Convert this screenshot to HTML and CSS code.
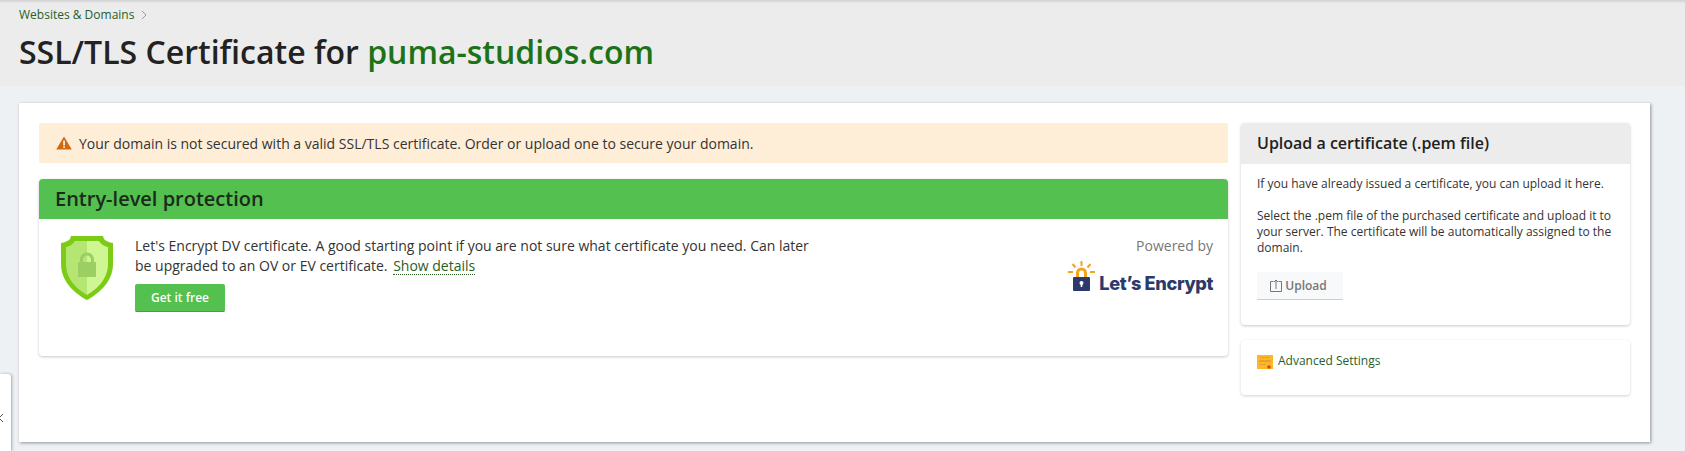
FILE: index.html
```html
<!DOCTYPE html>
<html lang="en">
<head>
<meta charset="utf-8">
<title>SSL/TLS Certificate</title>
<link rel="stylesheet" href="styles.css">
</head>
<body>
<header class="page-head">
  <nav class="crumbs"><a class="crumb-link">Websites &amp; Domains</a>
    <svg class="crumb-chevron" width="6" height="10" viewBox="0 0 6 10"><path d="M1 1l4 4-4 4" fill="none" stroke="#9a9a9a" stroke-width="1"/></svg>
  </nav>
  <h1 class="title">SSL/TLS Certificate for <span class="title-domain">puma-studios.com</span></h1>
</header>
<main class="sheet">
  <div class="left-col">
    <div class="alert">
      <svg class="alert-icon" width="16" height="14" viewBox="0 0 15 14" preserveAspectRatio="none"><path d="M7.5 0.5L14.8 13.5H0.2Z" fill="#cf6a12"/><rect x="6.8" y="4.6" width="1.5" height="4.8" fill="#fff"/><rect x="6.8" y="10.3" width="1.5" height="1.6" fill="#fff"/></svg>
      <span>Your domain is not secured with a valid SSL/TLS certificate. Order or upload one to secure your domain.</span>
    </div>
    <section class="offer">
      <h2 class="offer-head">Entry-level protection</h2>
      <div class="offer-body">
        <svg class="shield" width="52" height="64" viewBox="0 0 52 64">
          <path d="M10 0H42L43 3Q46 6 52 7V28C52 45 39 57 26 64C13 57 0 45 0 28V7Q6 6 9 3Z" fill="#7ccb14"/>
          <path d="M26 5V59C16 53 5 43 5 28V11Q11 10 14 5Z" fill="#b5e673"/>
          <path d="M26 5V59C36 53 47 43 47 28V11Q41 10 38 5Z" fill="#cff693"/>
          <path d="M19 27V24C19 14 33 14 33 24V27H30V24C30 18 22 18 22 24V27Z" fill="#9ccf63"/>
          <rect x="17" y="26" width="18" height="15" fill="#9ccf63"/>
        </svg>
        <div class="offer-text">
          <p class="offer-desc">Let's Encrypt DV certificate. A good starting point if you are not sure what certificate you need. Can later be upgraded to an OV or EV certificate. <a class="details-link">Show details</a></p>
          <button class="btn-free" type="button">Get it free</button>
        </div>
        <div class="vendor">
          <div class="powered">Powered by</div>
          <div class="le-logo">
            <svg class="le-mark" width="27" height="33" viewBox="0 0 27 33">
              <path d="M8 17V12a5.500 5.500 0 0 1 11 0v5h-3v-5a2.500 2.500 0 0 0-5 0v5z" fill="#f3a41f"/>
              <path d="M13.500 0v5M4.500 3l3 3.500M22.500 3l-3 3.500M0 11h5M22 11h5" stroke="#f3a41f" stroke-width="2" fill="none"/>
              <rect x="5" y="16" width="17" height="14" rx="1" fill="#2c3a6b"/>
              <circle cx="13.500" cy="22" r="2" fill="#fff"/>
              <rect x="12.700" y="22" width="1.600" height="4" fill="#fff"/>
            </svg>
            <span class="le-name">Let’s Encrypt</span>
          </div>
        </div>
      </div>
    </section>
  </div>
  <aside class="right-col">
    <section class="upload">
      <h2 class="upload-head">Upload a certificate (.pem file)</h2>
      <div class="upload-body">
        <p class="upload-text">If you have already issued a certificate, you can upload it here.</p>
        <p class="upload-text">Select the .pem file of the purchased certificate and upload it to your server. The certificate will be automatically assigned to the domain.</p>
        <button class="btn-upload" type="button">
          <svg width="12" height="13" viewBox="0 0 12 13"><path d="M3.500 2.500H.5V12.500H11.500V2.500H8.500M6 10V1M4 3l2-2 2 2" fill="none" stroke="#777" stroke-width="1"/></svg>
          Upload
        </button>
      </div>
    </section>
    <section class="advanced">
      <svg class="adv-icon" width="16" height="14" viewBox="0 0 16 14">
        <rect width="16" height="14" fill="#fbb829"/>
        <rect x="3" y="2" width="10" height="1" fill="#e9a02e"/>
        <rect x="2" y="5" width="12" height="2" fill="#e9a02e"/>
        <rect x="2" y="9" width="7" height="1" fill="#e9a02e"/>
        <circle cx="12" cy="12" r="1.800" fill="#d8461e"/>
      </svg>
      <a class="adv-link">Advanced Settings</a>
    </section>
  </aside>
</main>
<div class="side-tab">
  <svg width="6" height="10" viewBox="0 0 6 10"><path d="M5 1L1 5l4 4" fill="none" stroke="#555" stroke-width="1"/></svg>
</div>
</body>
</html>
```
FILE: styles.css
```css
* { box-sizing: border-box; }
html, body { margin: 0; height: 451px; overflow: hidden; }
body {
  background: #eef1f4;
  font-family: "Open Sans", "Liberation Sans", sans-serif;
  color: #222;
  font-size: 14px;
  position: relative;
}
.page-head {
  height: 86px;
  background: #ececec;
  box-shadow: inset 0 3px 2px -1px #d5d5d5;
  padding: 8px 19px 0;
}
.crumbs {
  display: flex;
  align-items: center;
  gap: 6px;
  height: 14px;
  font-size: 12px;
  line-height: 14px;
}
.crumb-link { color: #28601f; }
.crumb-chevron { margin-left: 1px; }
.title {
  margin: 9px 0 0;
  font-size: 32px;
  line-height: 42px;
  font-weight: 600;
  color: #222;
}
.title-domain { color: #1c7317; }
.sheet {
  margin: 17px 35px 0 19px;
  height: 339px;
  background: #fff;
  box-shadow: 1px 1px 3px rgba(0,0,0,.4);
  padding: 20px;
  display: flex;
  gap: 13px;
  align-items: flex-start;
}
.left-col { width: 1189px; flex: none; }
.alert {
  height: 40px;
  background: #ffeed7;
  border-radius: 2px;
  display: flex;
  align-items: center;
  gap: 7px;
  padding-left: 17px;
  font-size: 14px;
  color: #333;
}
.offer {
  margin-top: 16px;
  height: 177px;
  border-radius: 4px;
  box-shadow: 0 1px 3px rgba(0,0,0,.22);
  overflow: hidden;
}
.offer-head {
  margin: 0;
  height: 40px;
  background: #53c04f;
  padding-left: 16px;
  font-size: 20px;
  line-height: 39px;
  font-weight: 600;
  color: #1c2a1c;
}
.offer-body {
  display: flex;
  align-items: flex-start;
  padding: 17px 15px 0 22px;
}
.shield { flex: none; }
.offer-text { width: 680px; margin-left: 22px; }
.offer-desc { margin: 0; font-size: 14px; line-height: 20px; color: #333; }
.details-link {
  display: inline-block;
  line-height: 17px;
  color: #28601f;
  border-bottom: 1px dotted #28601f;
  margin-left: 2px;
}
.btn-free {
  display: block;
  margin-top: 8px;
  width: 90px;
  height: 28px;
  padding: 0;
  background: #53c04f;
  border: 0;
  border-bottom: 1px solid #3da03a;
  border-radius: 2px;
  color: #fff;
  font: 600 12px "Open Sans", sans-serif;
}
.vendor { margin-left: auto; text-align: right; }
.powered { font-size: 14px; line-height: 20px; color: #777; }
.le-logo { display: flex; align-items: flex-end; margin-top: 5px; gap: 4px; justify-content: flex-end; }
.le-mark { flex: none; }
.le-name {
  font-family: Inter, sans-serif;
  font-weight: 800;
  font-size: 18.2px;
  letter-spacing: -0.4px;
  line-height: 24px;
  margin-bottom: -1px;
  color: #2c3a6b;
  white-space: nowrap;
}
.right-col { width: 389px; flex: none; }
.upload {
  height: 202px;
  border-radius: 4px;
  box-shadow: 0 1px 3px rgba(0,0,0,.22);
  overflow: hidden;
}
.upload-head {
  margin: 0;
  height: 41px;
  background: #ececec;
  padding-left: 16px;
  font-size: 16px;
  line-height: 40px;
  font-weight: 600;
  color: #222;
}
.upload-body { padding: 12px 16px 0; }
.upload-text { margin: 0 0 16px; font-size: 12px; line-height: 16px; color: #333; }
.btn-upload {
  display: flex;
  align-items: center;
  justify-content: center;
  gap: 3px;
  width: 86px;
  height: 28px;
  margin-top: 16px;
  padding: 0 3px 0 0;
  background: #f8f9fa;
  border: 0;
  border-bottom: 1px solid #cfcfcf;
  color: #777;
  font: 600 12px "Open Sans", sans-serif;
}
.advanced {
  margin-top: 15px;
  height: 55px;
  border-radius: 4px;
  box-shadow: 0 1px 3px rgba(0,0,0,.18);
  padding: 13px 16px 0;
  display: flex;
  align-items: flex-start;
  gap: 5px;
}
.adv-icon { flex: none; margin-top: 2px; }
.adv-link { font-size: 12px; line-height: 16px; color: #28601f; }
.side-tab {
  position: absolute;
  left: 0;
  top: 374px;
  width: 11px;
  height: 77px;
  background: #fff;
  border-top-right-radius: 3px;
  box-shadow: 1px 0 3px rgba(0,0,0,.3);
}
.side-tab svg { position: absolute; left: -2px; top: 39px; }
```
